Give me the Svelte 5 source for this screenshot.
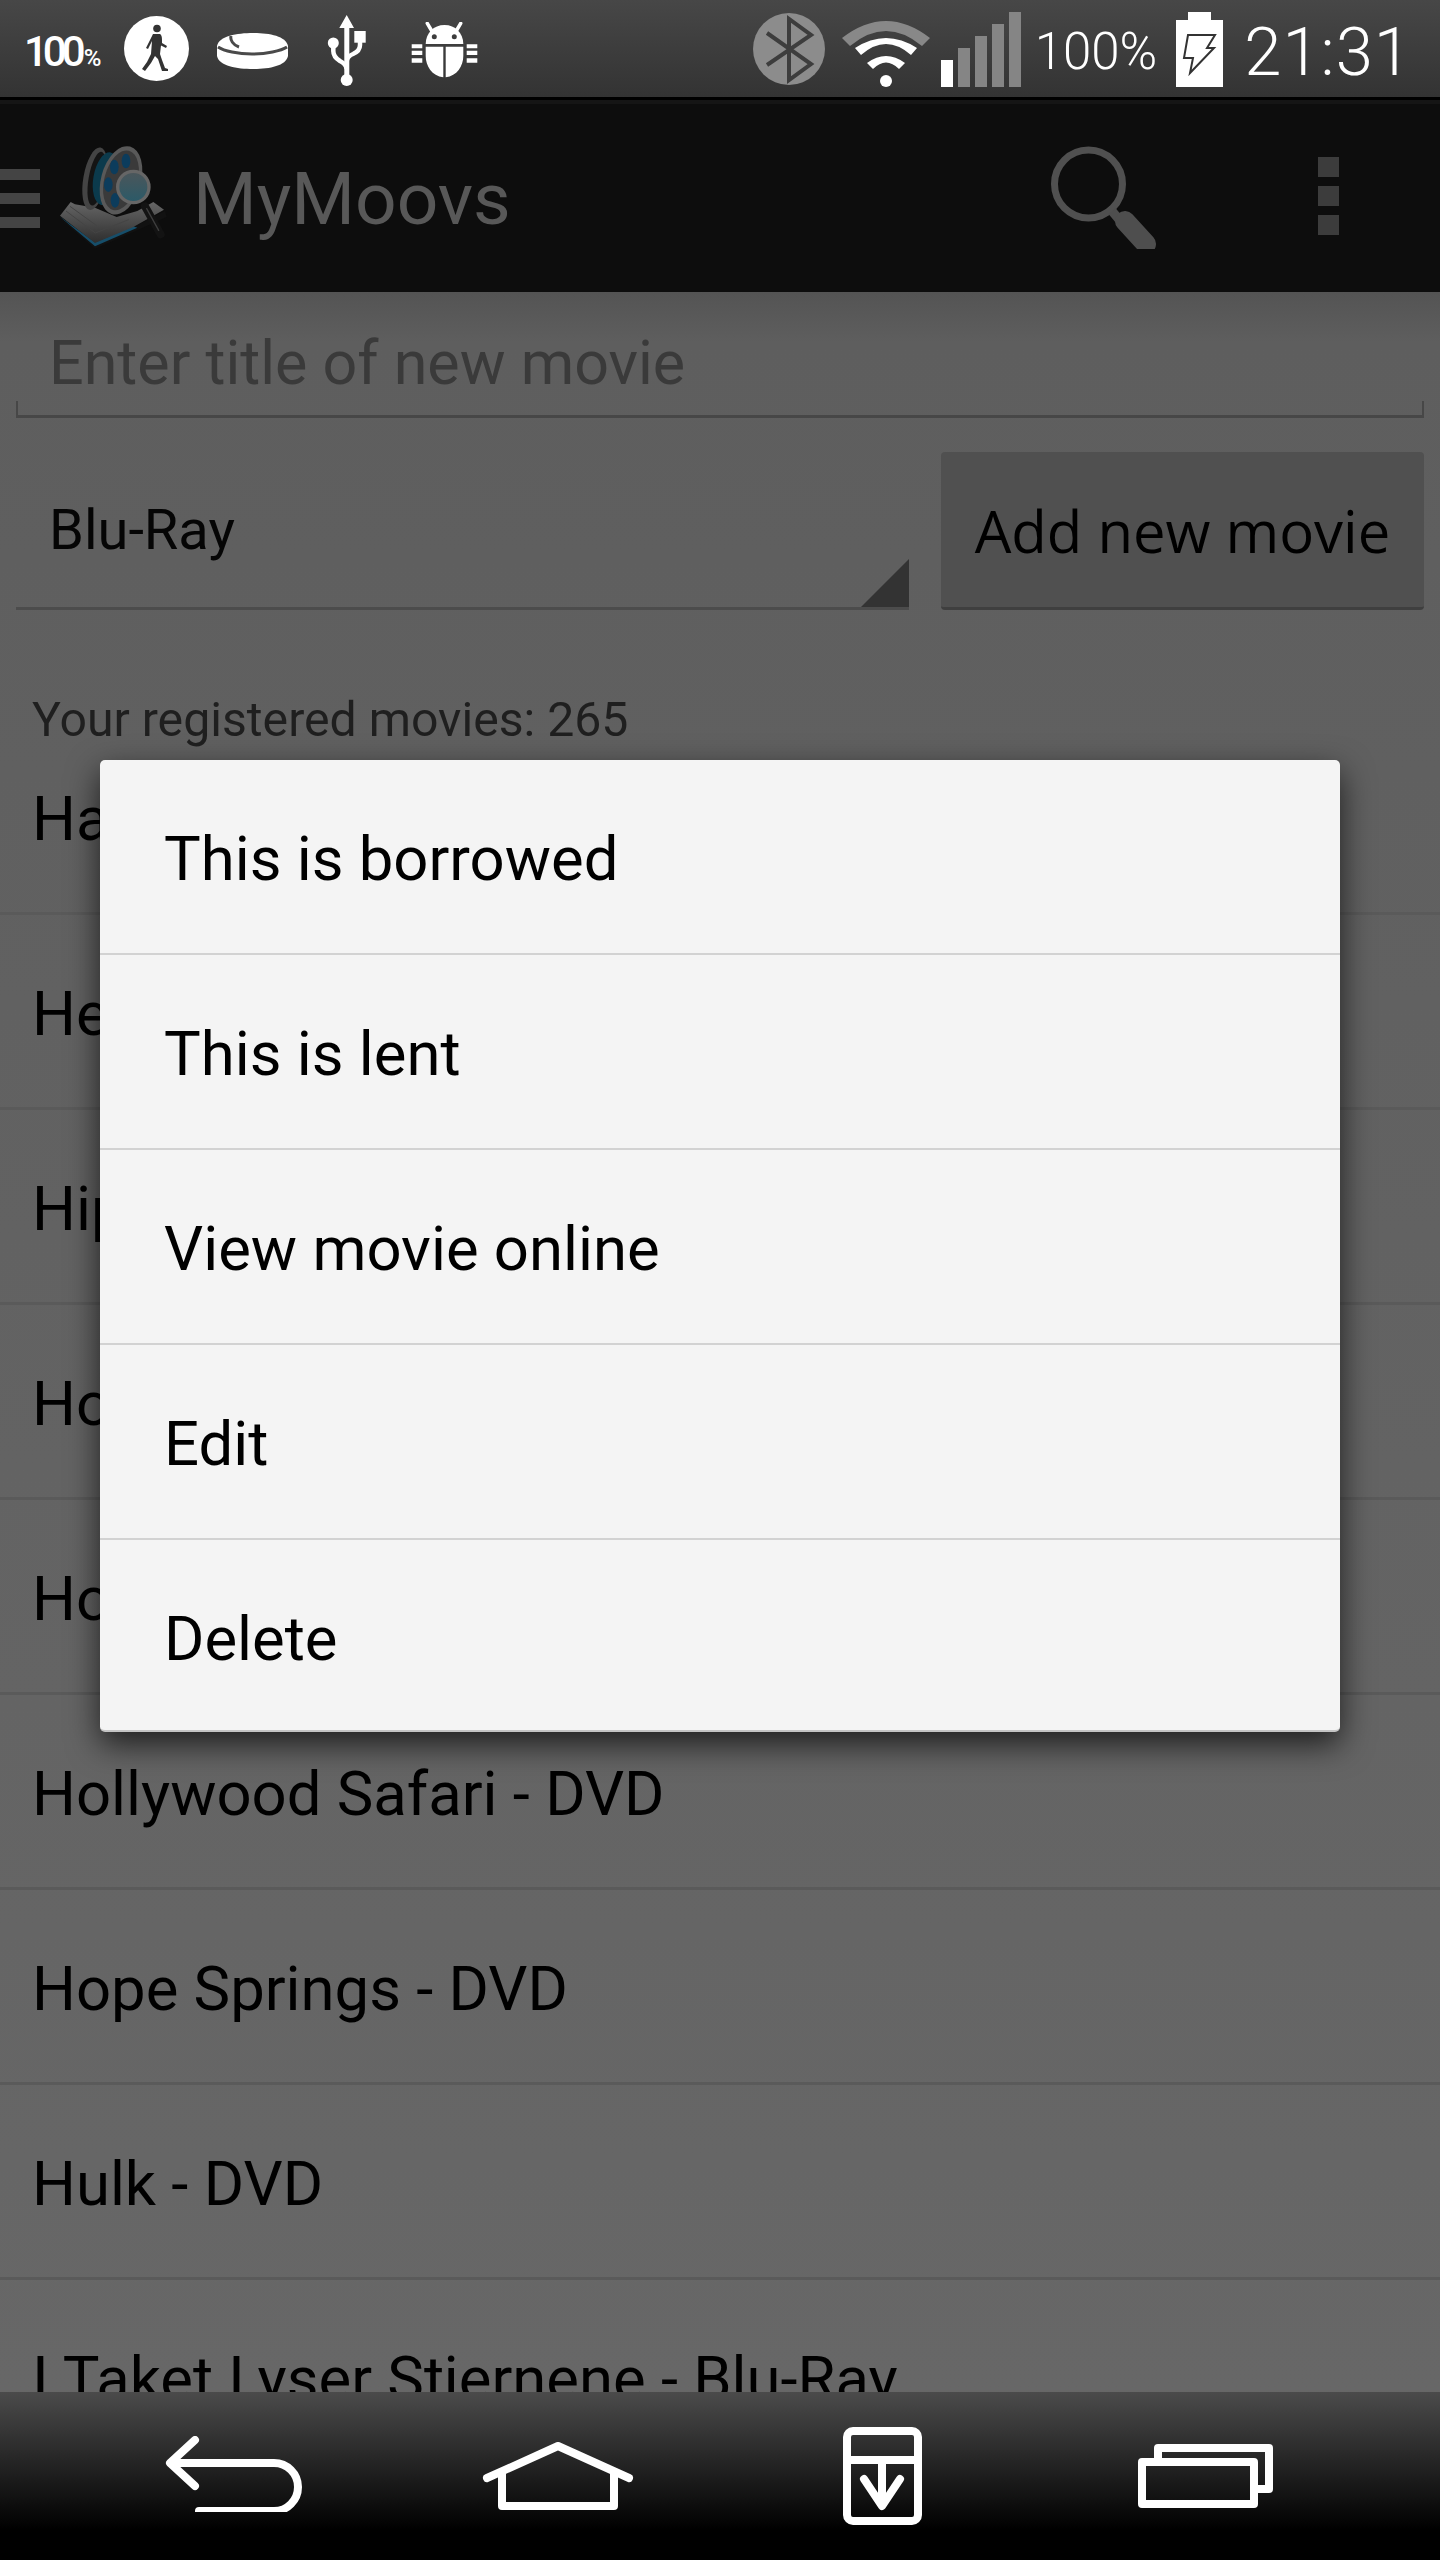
<script>
    const menu = ['This is borrowed', 'This is lent', 'View movie online', 'Edit', 'Delete'];
    // titles are covered by the dialog, only the first letters show
    const movies = ['Ha', 'He', 'Hip', 'Ho', 'Ho', 'Hollywood Safari - DVD', 'Hope Springs - DVD', 'Hulk - DVD', 'I Taket Lyser Stjernene - Blu-Ray'];
    const bars = [60, 48, 36, 24, 12];
</script>

<div class="phone">
    <header class="status">
        <div class="status-left">
            <span class="zoom-level">100<small>%</small></span>
            <svg class="walk" viewBox="0 0 65 65">
                <circle cx="32.5" cy="32.5" r="32.5" fill="#fff" />
                <circle cx="33" cy="12.5" r="3.8" fill="#333" />
                <path d="M29 18h7q2 1 2 6v3l5 3-1 2-5-2.500-1 8.500 2 6 3 8 3 1v2h-6l-4-12-3-3-4 7-6 8-3-2 5-7 4-8 1-13-4 8-2-1z" fill="#333" />
            </svg>
            <svg class="ring" viewBox="0 0 71 36">
                <path d="M0 13C2 3 20 0 36 0s33 3 35 13v10c-2 10-19 13-35 13S2 33 0 23z" fill="#fff" />
                <path d="M1 14c6 4 20 7 34 7s29-3 35-7M14 3c-1 4 2 9 8 11" fill="none" stroke="#4a4a4a" stroke-width="3" />
            </svg>
            <svg class="usb" viewBox="0 0 39 71">
                <path d="M19.700 0L27 13h-4.700v48h-5V13H12.300z" fill="#fff" />
                <circle cx="19.700" cy="65" r="6" fill="#fff" />
                <circle cx="6.300" cy="28" r="5.500" fill="#fff" />
                <rect x="27.300" y="16" width="11.400" height="11.700" fill="#fff" />
                <path d="M6.300 30v6q0 6 6.700 10 6 3 6.700 8M33 27v3q0 6-7 9-5 2-6 6" fill="none" stroke="#fff" stroke-width="4.500" />
            </svg>
            <svg class="bug" viewBox="0 0 67 56">
                <path d="M16.300 1.300L22 11M49.700 1.300L44 11" fill="none" stroke="#fff" stroke-width="3.500" stroke-linecap="round" />
                <path d="M14.700 22c0-11 8-19 18.800-19s18.800 8 18.800 19z" fill="#fff" />
                <circle cx="23.300" cy="14.700" r="2.500" fill="#3c3c3c" />
                <circle cx="43.300" cy="14.700" r="2.500" fill="#3c3c3c" />
                <path d="M14.700 24.700h17.600v30.600C21 54 14.700 44 14.700 34zM34.700 24.700h17.600V34c0 10-6.300 20-17.600 21.300z" fill="#fff" />
                <path d="M.7 22.300h10.600v4H.7zM.7 28.700h10.600V33H.7zM.7 36.300h10.600v4.400H.7zM55.700 22.300h10.600v4H55.700zM55.700 28.700h10.600V33H55.700zM55.700 36.300h10.600v4.400H55.700z" fill="#fff" />
            </svg>
        </div>
        <div class="status-right">
            <svg class="bluetooth" viewBox="0 0 72 72">
                <circle cx="36" cy="36" r="36" fill="#8c8c8c" />
                <path d="M14 20l44 31-22 16V6l22 16-44 30" fill="none" stroke="#3d3d3d" stroke-width="4" />
            </svg>
            <svg class="wifi" viewBox="0 0 88 67">
                <path d="M0 18Q44-16 88 18L80 26Q44-4 8 26Z" fill="#888" />
                <path d="M13 28Q44 8 75 28L69 35Q44 13 19 35Z" fill="#fff" />
                <path d="M25 43Q44 29 63 43L57 49Q44 36 31 49Z" fill="#fff" />
                <circle cx="44" cy="61" r="6" fill="#fff" />
            </svg>
            <div class="signal">
                {#each bars as top, i}
                    <span class:on={i === 0} style="height: {87 - top}px"></span>
                {/each}
            </div>
            <span class="percent">100%</span>
            <svg class="battery" viewBox="0 0 47 75">
                <path d="M12 0h23v8h12v67H0V8h12z" fill="#fff" />
                <path d="M12 23H39L31 36h7L14 61l3-15H8z" fill="#fff" stroke="#333" stroke-width="2" />
            </svg>
            <span class="clock">21:31</span>
        </div>
    </header>

    <div class="actionbar">
        <div class="drawer"><i></i><i></i><i></i></div>
        <!-- viewBox is 3x the logo's real size -->
        <svg class="logo" viewBox="0 0 390 360">
            <defs>
                <linearGradient id="pages" x1="0" y1="0" x2="0" y2="1">
                    <stop offset="0" stop-color="#666" />
                    <stop offset="1" stop-color="#2e2e2e" />
                </linearGradient>
                <linearGradient id="glass" x1="0" y1="0" x2="0" y2="1">
                    <stop offset="0" stop-color="#4c565a" />
                    <stop offset="1" stop-color="#2a5a68" />
                </linearGradient>
            </defs>
            <path d="M135 318L250 270 345 222 350 240 250 285 135 335 30 245z" fill="#111" />
            <path d="M28 238L135 316 250 268 262 272 135 328z" fill="#164e6a" />
            <path d="M30 236L62 195 75 202 135 212 200 240 262 222 310 195 342 218 250 270 135 318z" fill="url(#pages)" />
            <path d="M48 222l88 66 100-40M60 208l80 58" fill="none" stroke="#444" stroke-width="3" />
            <ellipse cx="135" cy="125" rx="35" ry="95" transform="rotate(10 135 125)" fill="#444" />
            <ellipse cx="140" cy="125" rx="24" ry="82" transform="rotate(10 140 125)" fill="#141414" />
            <ellipse cx="168" cy="125" rx="38" ry="80" transform="rotate(10 168 125)" fill="#0b3a4c" />
            <ellipse cx="213" cy="130" rx="60" ry="105" transform="rotate(15 213 130)" fill="#595959" />
            <ellipse cx="213" cy="130" rx="50" ry="92" transform="rotate(15 213 130)" fill="#3a3a3a" />
            <ellipse cx="228" cy="72" rx="13" ry="22" fill="#0c3c5c" />
            <ellipse cx="193" cy="90" rx="13" ry="22" fill="#0c3c5c" />
            <ellipse cx="175" cy="143" rx="13" ry="22" fill="#0c3c5c" />
            <ellipse cx="195" cy="190" rx="13" ry="22" fill="#0c3c5c" />
            <path d="M285 208L332 292" stroke="#131313" stroke-width="24" stroke-linecap="round" />
            <path d="M290 215L326 280" stroke="#3e3e3e" stroke-width="4" stroke-linecap="round" />
            <circle cx="250" cy="150" r="47" fill="url(#glass)" stroke="#666" stroke-width="10" />
        </svg>
        <span class="title">MyMoovs</span>
        <svg class="search" viewBox="0 0 105 103">
            <circle cx="37.500" cy="38" r="34" fill="none" stroke="#505050" stroke-width="7" />
            <path d="M61 65l10 12" stroke="#4e4e4e" stroke-width="9" />
            <path d="M74 75l21 23" stroke="#4e4e4e" stroke-width="20" stroke-linecap="round" />
        </svg>
        <div class="overflow"><i></i><i></i><i></i></div>
    </div>

    <main class="content">
        <div class="title-input">Enter title of new movie</div>
        <div class="add-row">
            <div class="spinner">Blu-Ray</div>
            <button class="add-btn">Add new movie</button>
        </div>
        <div class="count">Your registered movies: 265</div>
        <ul class="movies">
            {#each movies as movie}
                <li>{movie}</li>
            {/each}
        </ul>

        <div class="dialog">
            {#each menu as item}
                <div class="dialog-item">{item}</div>
            {/each}
        </div>
    </main>

    <nav class="navbar">
        <svg class="nav-back" viewBox="0 0 144 76" fill="none" stroke="#fff" stroke-width="8" stroke-linecap="round" stroke-linejoin="round">
            <path d="M35 4L10 27l25 23M12 27h102a24 24 0 0 1 0 48H39" />
        </svg>
        <svg class="nav-home" viewBox="0 0 156 70" fill="none" stroke="#fff" stroke-width="8" stroke-linecap="round" stroke-linejoin="round">
            <path d="M7 36L78 4l71 32" />
            <path d="M22 31v33h112V31" />
        </svg>
        <svg class="nav-download" viewBox="0 0 79 98" fill="none" stroke="#fff" stroke-width="8" stroke-linecap="round" stroke-linejoin="round">
            <rect x="4" y="4" width="71" height="90" rx="6" />
            <path d="M4 33h71M39 33v44M21 52l18 27 18-27" />
        </svg>
        <svg class="nav-recents" viewBox="0 0 135 64" fill="none" stroke="#fff" stroke-width="8" stroke-linejoin="round">
            <path d="M20 14V4h111v41h-11" />
            <rect x="4" y="18" width="112" height="42" />
        </svg>
    </nav>
</div>

<style>
    :global(body) {
        margin: 0;
        background: #000;
    }

    .phone {
        width: 1440px;
        height: 2560px;
        display: flex;
        flex-direction: column;
        overflow: hidden;
        font-family: Roboto, "Liberation Sans", sans-serif;
    }

    .status {
        height: 97px;
        flex: none;
        display: flex;
        justify-content: space-between;
        align-items: center;
        padding: 0 28px 0 24px;
        background: linear-gradient(#474747, #333);
        color: #fff;
        box-sizing: border-box;
    }

    .status-left,
    .status-right {
        display: flex;
        align-items: center;
    }

    .zoom-level {
        width: 70px;
        font-family: "Liberation Sans Narrow", Roboto, sans-serif;
        font-size: 42px;
        font-weight: 500;
        letter-spacing: -5px;
        margin-top: 6px;
        white-space: nowrap;
    }

    .zoom-level small {
        margin-left: 3px;
        font-size: 24px;
        letter-spacing: -1px;
    }

    .walk {
        width: 65px;
        height: 65px;
        margin-left: 30px;
    }

    .ring {
        width: 71px;
        height: 36px;
        margin-left: 28px;
        margin-top: 4px;
    }

    .usb {
        width: 39px;
        height: 71px;
        margin-left: 39px;
        margin-top: 4px;
    }

    .bug {
        width: 67px;
        height: 56px;
        margin-left: 45px;
        margin-top: 3px;
    }

    .bluetooth {
        width: 72px;
        height: 72px;
    }

    .wifi {
        width: 88px;
        height: 67px;
        margin-left: 17px;
        margin-top: 10px;
    }

    .signal {
        display: flex;
        align-items: flex-end;
        gap: 5px;
        height: 75px;
        margin-left: 11px;
        margin-top: 2px;
    }

    .signal span {
        width: 12px;
        background: #858585;
    }

    .signal span.on {
        background: #fff;
    }

    .percent {
        margin-left: 14px;
        font-size: 51px;
        font-weight: 300;
        margin-top: 6px;
    }

    .battery {
        width: 47px;
        height: 75px;
        margin-left: 19px;
        margin-top: 2px;
    }

    .clock {
        margin-left: 21px;
        font-size: 67px;
        font-weight: 300;
        letter-spacing: 1px;
        margin-top: 6px;
    }

    .actionbar {
        height: 195px;
        flex: none;
        display: flex;
        align-items: center;
        background: #0d0d0d;
        border-top: 3px solid #000;
        box-shadow: inset 0 4px 0 #151515;
        box-sizing: border-box;
    }

    .drawer {
        width: 40px;
        display: flex;
        flex-direction: column;
        gap: 13px;
        margin-top: 4px;
    }

    .drawer i {
        display: block;
        height: 11px;
        background: #444;
    }

    .logo {
        width: 130px;
        height: 120px;
        margin-left: 10px;
        margin-top: 2px;
        filter: blur(0.6px);
    }

    .title {
        margin-left: 13px;
        margin-top: 5px;
        font-size: 73px;
        color: #585858;
        flex: 1;
    }

    .search {
        width: 105px;
        height: 103px;
        margin-top: 3px;
    }

    .overflow {
        width: 21px;
        display: flex;
        flex-direction: column;
        gap: 9px;
        margin-left: 162px;
        margin-right: 101px;
    }

    .overflow i {
        display: block;
        height: 20px;
        background: #3c3c3c;
    }

    .content {
        position: relative;
        flex: 1;
        overflow: hidden;
        background: linear-gradient(#545454, #5e5e5e 50px, #606060 480px, #676767);
        color: #000;
    }

    .title-input {
        height: 126px;
        margin: 0 16px;
        padding: 29px 0 0 33px;
        box-sizing: border-box;
        font-size: 61px;
        line-height: 84px;
        color: #3a3a3a;
        border-bottom: 3px solid #474747;
        background:
            linear-gradient(#474747, #474747) left bottom / 2px 14px no-repeat,
            linear-gradient(#474747, #474747) right bottom / 2px 14px no-repeat;
    }

    .add-row {
        display: flex;
        gap: 32px;
        margin: 34px 16px 0;
        height: 158px;
    }

    .spinner {
        position: relative;
        flex: 1;
        padding-left: 33px;
        font-size: 56px;
        line-height: 156px;
        color: #050505;
        border-bottom: 3px solid #4c4c4c;
        box-sizing: border-box;
    }

    .spinner::after {
        content: '';
        position: absolute;
        right: 0;
        bottom: 0;
        border-style: solid;
        border-width: 0 0 48px 48px;
        border-color: transparent transparent #333 transparent;
    }

    .add-btn {
        width: 483px;
        padding: 2px 0 0;
        border: 0;
        border-bottom: 3px solid #3f3f3f;
        border-radius: 4px;
        background: #505050;
        color: #000;
        font-family: "Open Sans", Roboto, sans-serif;
        font-size: 58px;
    }

    .count {
        margin: 82px 0 0 32px;
        font-size: 48.200px;
        line-height: 56px;
        color: #1f1f1f;
    }

    .movies {
        list-style: none;
        margin: -28px 0 0;
        padding: 0;
    }

    .movies li {
        height: 195px;
        padding-left: 32px;
        box-sizing: border-box;
        font-size: 61.600px;
        line-height: 198px;
        white-space: nowrap;
        border-bottom: 3px solid #5a5a5a;
    }

    .dialog {
        position: absolute;
        left: 100px;
        top: 468px;
        width: 1240px;
        background: #f4f4f4;
        border-radius: 5px;
        border-bottom: 2px solid #c4c4c4;
        box-shadow: 0 12px 32px rgba(0, 0, 0, 0.7);
    }

    .dialog-item {
        height: 195px;
        padding-left: 64px;
        box-sizing: border-box;
        font-size: 61.600px;
        line-height: 198px;
        color: #000;
        border-bottom: 2px solid #d2d2d2;
    }

    .dialog-item:last-child {
        height: 190px;
        border-bottom: 0;
    }

    .navbar {
        height: 168px;
        flex: none;
        display: flex;
        background: linear-gradient(#4b4b4b, #000 138px);
        box-sizing: border-box;
        padding-left: 160px;
    }

    .nav-back {
        width: 144px;
        height: 76px;
        margin-top: 44px;
    }

    .nav-home {
        width: 156px;
        height: 70px;
        margin: 50px 0 0 176px;
    }

    .nav-download {
        width: 79px;
        height: 98px;
        margin: 35px 0 0 207px;
    }

    .nav-recents {
        width: 135px;
        height: 64px;
        margin: 52px 0 0 216px;
    }
</style>
